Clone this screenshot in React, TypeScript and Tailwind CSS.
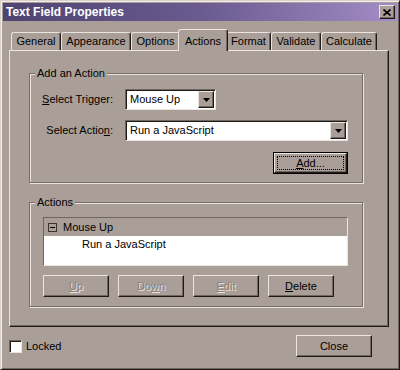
import React from "react";

const raised =
  "border border-t-[#ebe4df] border-l-[#ebe4df] border-r-[#1e1a18] border-b-[#1e1a18] shadow-[inset_-1px_-1px_0_#6f6660]";

function Arrow() {
  return (
    <svg width="7" height="4" viewBox="0 0 7 4">
      <path d="M0 0H7L3.5 4Z" fill="#000" />
    </svg>
  );
}

function Combo({ w, text }: { w: string; text: string }) {
  return (
    <div
      className={`${w} h-[21px] flex bg-white border border-t-[#6f6660] border-l-[#6f6660] border-r-[#ebe4df] border-b-[#ebe4df] shadow-[inset_1px_1px_0_#1e1a18] p-[1px] pl-[1px]`}
    >
      <div className="flex-1 flex items-center pl-[3px] leading-none">{text}</div>
      <div className="w-[16px] h-full bg-[#aa9f98] flex items-center justify-center border border-t-[#ebe4df] border-l-[#ebe4df] border-r-[#1e1a18] border-b-[#1e1a18] shadow-[inset_-1px_-1px_0_#6f6660]">
        <Arrow />
      </div>
    </div>
  );
}

function Btn({
  pre,
  u,
  post,
  disabled,
  w,
}: {
  pre: string;
  u: string;
  post: string;
  disabled?: boolean;
  w: string;
}) {
  return (
    <div className={`${w} h-[22px] flex items-center justify-center ${raised}`}>
      <span
        className={
          disabled
            ? "text-[#8a7f78] [text-shadow:1px_1px_0_#ebe4df]"
            : "text-black"
        }
      >
        {pre}
        <span className="underline underline-offset-[1px]">{u}</span>
        {post}
      </span>
    </div>
  );
}

function Group({
  label,
  h,
  mt,
  children,
}: {
  label: string;
  h: string;
  mt: string;
  children: React.ReactNode;
}) {
  return (
    <div
      className={`w-[334px] ${h} ${mt} border border-[#776d67] shadow-[inset_1px_1px_0_#ebe4df,1px_1px_0_#ebe4df] flex flex-col`}
    >
      <div className="-mt-[8px] ml-[5px] self-start px-[2px] bg-[#aa9f98] h-[14px] leading-[14px]">
        {label}
      </div>
      {children}
    </div>
  );
}

export default function App() {
  const tabs: [string, string, boolean][] = [
    ["General", "w-[50px]", false],
    ["Appearance", "w-[70px]", false],
    ["Options", "w-[49px]", false],
    ["Actions", "w-[50px]", true],
    ["Format", "w-[45px]", false],
    ["Validate", "w-[50px]", false],
    ["Calculate", "w-[56px]", false],
  ];
  return (
    <div className="w-[400px] h-[370px] bg-[#aa9f98] border border-t-[#d9d1cb] border-l-[#d9d1cb] border-r-[#1e1a18] border-b-[#1e1a18] shadow-[inset_1px_1px_0_#f3eeea,inset_-1px_-1px_0_#6f6660] p-[2px] flex flex-col font-['Liberation_Sans',Arial,sans-serif] text-[11px] text-black">
      {/* Title bar */}
      <div className="h-[18px] shrink-0 flex items-center justify-between bg-gradient-to-r from-[#4e4470] via-[#6a5a90] to-[#a38dc6] pl-[3px] pr-[2px]">
        <span className="text-white font-bold text-[12px] leading-none">Text Field Properties</span>
        <div className={`w-[16px] h-[14px] bg-[#aa9f98] flex items-center justify-center ${raised}`}>
          <svg width="8" height="7" viewBox="0 0 8 7">
            <path d="M0.5 0.5L7.5 6.5M7.5 0.5L0.5 6.5" stroke="#000" strokeWidth="1.6" />
          </svg>
        </div>
      </div>

      <div className="flex flex-col px-[6px] pt-[8px]">
        {/* Tabs */}
        <div className="h-[21px] flex items-end pl-[2px]">
          {tabs.map(([name, w, sel]) =>
            sel ? (
              <div
                key={name}
                className={`${w} h-[22px] -mx-[2px] -mb-px relative z-10 bg-[#aa9f98] flex items-start justify-center pt-[3px] border-t border-l border-r border-t-[#ebe4df] border-l-[#ebe4df] border-r-[#1e1a18] rounded-t-[3px] shadow-[inset_-1px_0_0_#6f6660]`}
              >
                {name}
              </div>
            ) : (
              <div
                key={name}
                className={`${w} h-[18px] flex items-center justify-center border-t border-l border-r border-t-[#ebe4df] border-l-[#ebe4df] border-r-[#1e1a18] rounded-t-[3px] shadow-[inset_-1px_0_0_#6f6660]`}
              >
                {name}
              </div>
            )
          )}
        </div>

        {/* Panel */}
        <div className="w-[380px] h-[277px] border border-t-[#ebe4df] border-l-[#ebe4df] border-r-[#1e1a18] border-b-[#1e1a18] shadow-[inset_-1px_-1px_0_#6f6660] flex flex-col pl-[19px] pt-[22px]">
          <Group label="Add an Action" h="h-[110px]" mt="mt-0">
            <div className="flex items-center mt-[9px]">
              <div className="w-[83px] text-right">
                <span className="underline underline-offset-[1px]">S</span>elect Trigger:
              </div>
              <div className="ml-[12px]">
                <Combo w="w-[91px]" text="Mouse Up" />
              </div>
            </div>
            <div className="flex items-center mt-[10px]">
              <div className="w-[83px] text-right">
                Select Actio<span className="underline underline-offset-[1px]">n</span>:
              </div>
              <div className="ml-[12px]">
                <Combo w="w-[223px]" text="Run a JavaScript" />
              </div>
            </div>
            <div className="mt-[11px] ml-[243px] w-[75px] h-[22px] border border-black">
              <div className={`w-full h-full flex items-center justify-center ${raised} p-[2px]`}>
                <div className="w-full h-full flex items-center justify-center border border-dotted border-black">
                  <span>
                    <span className="underline underline-offset-[1px]">A</span>dd...
                  </span>
                </div>
              </div>
            </div>
          </Group>

          <Group label="Actions" h="h-[105px]" mt="mt-[19px]">
            <div className="ml-[13px] mt-[8px] w-[305px] h-[49px] bg-white flex flex-col border border-t-[#6f6660] border-l-[#6f6660] border-r-[#ebe4df] border-b-[#ebe4df]">
              <div className="h-[18px] bg-[#aa9f98] flex items-center pl-[4px]">
                <div className="w-[9px] h-[9px] border border-[#3a3330] flex items-center justify-center">
                  <div className="w-[5px] h-px bg-black" />
                </div>
                <span className="ml-[6px]">Mouse Up</span>
              </div>
              <div className="h-[17px] flex items-center pl-[38px]">Run a JavaScript</div>
            </div>
            <div className="ml-[13px] mt-[9px] flex gap-[9px]">
              <Btn w="w-[66px]" pre="" u="U" post="p" disabled />
              <Btn w="w-[66px]" pre="Do" u="w" post="n" disabled />
              <Btn w="w-[66px]" pre="" u="E" post="dit" disabled />
              <Btn w="w-[66px]" pre="" u="D" post="elete" />
            </div>
          </Group>
        </div>

        {/* Bottom row */}
        <div className="flex items-center mt-[8px] h-[22px]">
          <div className="w-[13px] h-[13px] bg-white border border-t-[#6f6660] border-l-[#6f6660] border-r-[#ebe4df] border-b-[#ebe4df] shadow-[inset_1px_1px_0_#1e1a18]" />
          <span className="ml-[4px]">Locked</span>
          <div className="ml-auto mr-[19px]">
            <Btn w="w-[76px]" pre="Clos" u="" post="e" />
          </div>
        </div>
      </div>
    </div>
  );
}
